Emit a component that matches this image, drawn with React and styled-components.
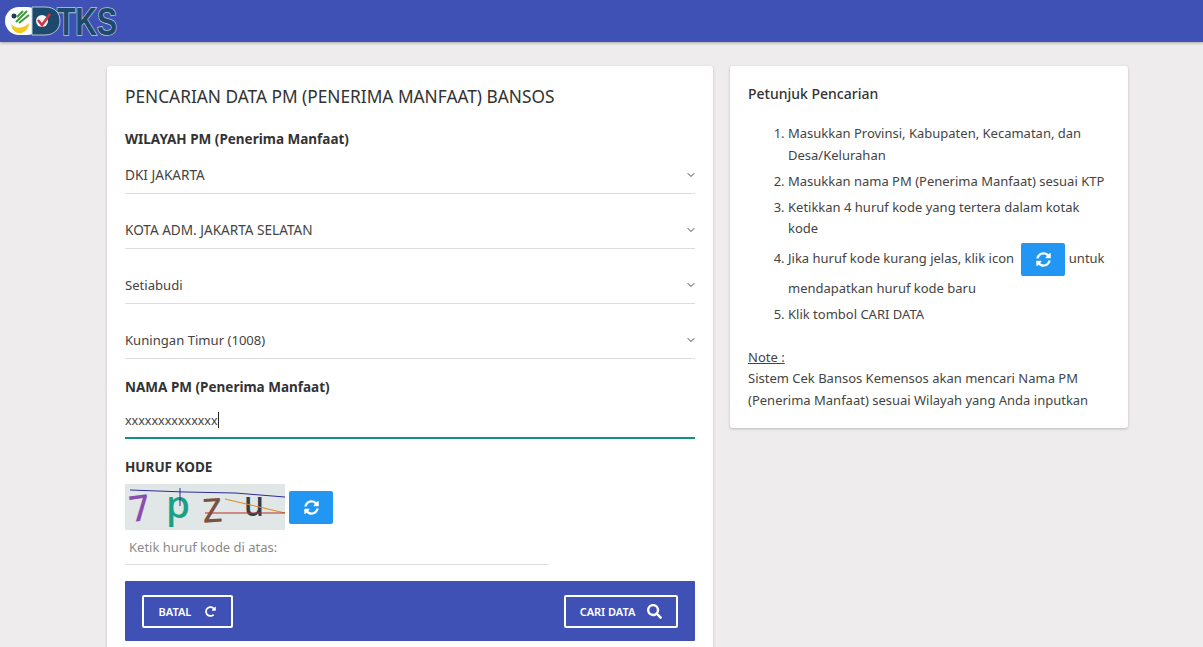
import React from "react";
import styled, { createGlobalStyle } from "styled-components";
import { FiChevronDown } from "react-icons/fi";
import { FaSyncAlt, FaRedoAlt, FaSearch } from "react-icons/fa";

const GlobalStyle = createGlobalStyle`
  html, body {
    margin: 0;
    padding: 0;
    height: 647px;
    overflow: hidden;
    background: #eeecec;
    font-family: "Noto Sans", "Open Sans", sans-serif;
    color: #333;
  }
`;

const Header = styled.header`
  height: 42px;
  background: #3f51b5;
  box-shadow: 0 1px 3px rgba(0, 0, 0, 0.3);
  display: flex;
  align-items: center;
  padding-left: 5px;
`;

const Page = styled.main`
  display: grid;
  grid-template-columns: 606px 398px;
  column-gap: 17px;
  align-items: start;
  padding: 24px 0 0 107px;
`;

const Card = styled.section`
  background: #fff;
  border-radius: 3px;
  box-shadow: 0 1px 3px rgba(0, 0, 0, 0.22);
`;

const FormCard = styled(Card)`
  padding: 18px 18px 40px;
`;

const HelpCard = styled(Card)`
  padding: 17px 18px 17px;
`;

const Title = styled.h1`
  margin: 0;
  font-size: 17.3px;
  line-height: 26px;
  font-weight: 400;
  color: #333;
`;

const Label = styled.div`
  font-size: 13.5px;
  line-height: 20px;
  font-weight: 700;
  color: #333;
  margin-top: ${(p) => p.$top || 0}px;
`;

const SelectRow = styled.div`
  height: ${(p) => (p.$first ? 45 : 55)}px;
  box-sizing: border-box;
  border-bottom: 1px solid #dcdcdc;
  display: flex;
  align-items: flex-end;
  justify-content: space-between;
  font-size: ${(p) => p.$size}px;
  line-height: 20px;
  padding-bottom: 8px;
  color: #444;
  svg {
    font-size: 12px;
    margin: 0 -2px 4px 0;
    stroke-width: 2;
    color: #444;
  }
`;

const NameInput = styled.div`
  height: 36px;
  box-sizing: border-box;
  border-bottom: 2px solid #138f85;
  display: flex;
  align-items: center;
  font-size: 12.5px;
  color: #444;
  margin-top: 6px;
`;

const Caret = styled.span`
  display: inline-block;
  width: 1px;
  height: 16px;
  background: #222;
`;

const CaptchaRow = styled.div`
  display: flex;
  align-items: flex-end;
  gap: 4px;
  margin-top: 7px;
`;

const Captcha = styled.svg`
  display: block;
  width: 160px;
  height: 46px;
  background: #e1e6e6;
`;

const RefreshButton = styled.span`
  display: inline-flex;
  align-items: center;
  justify-content: center;
  width: 44px;
  height: 33px;
  background: #2196f3;
  color: #fff;
  border-radius: 2px;
  font-size: 15px;
  margin-bottom: 6px;
`;

const InlineRefresh = styled(RefreshButton)`
  margin: -3px 0 -3px 4px;
  vertical-align: middle;
`;

const CodeInput = styled.div`
  width: 423px;
  height: 35px;
  box-sizing: border-box;
  border-bottom: 1px solid #dcdcdc;
  padding-left: 4px;
  font-size: 13px;
  line-height: 35px;
  color: #8a8a8a;
`;

const ActionBar = styled.div`
  height: 60px;
  background: #3f51b5;
  border-radius: 1px;
  margin-top: 16px;
  display: flex;
  align-items: center;
  justify-content: space-between;
  padding: 0 17px;
`;

const OutlineButton = styled.span`
  display: inline-flex;
  align-items: center;
  justify-content: center;
  gap: ${(p) => p.$gap}px;
  box-sizing: border-box;
  width: ${(p) => p.$width}px;
  height: 33px;
  border: 2px solid #fff;
  border-radius: 2px;
  color: #fff;
  font-size: 11px;
  font-weight: 600;
`;

const HelpTitle = styled.h2`
  margin: 0 0 19px;
  font-size: 14px;
  line-height: 21px;
  font-weight: 500;
  color: #333;
`;

const Steps = styled.ol`
  margin: 0;
  padding: 0 0 0 40px;
  font-size: 13px;
  color: #444;
`;

const Step = styled.li`
  line-height: 21.5px;
  margin-bottom: 4.5px;
`;

const IconStep = styled(Step)`
  line-height: 30px;
  margin-top: -1px;
  margin-bottom: 1px;
`;

const Note = styled.div`
  margin-top: 21px;
  font-size: 13px;
  line-height: 21.5px;
  color: #444;
  u {
    display: block;
  }
`;

const Logo = () => (
  <svg width="116" height="34" viewBox="0 0 116 34" style={{ display: "block" }}>
    <rect x="0" y="3" width="36" height="28" rx="14" fill="#fff" />
    <circle cx="9" cy="12" r="2.5" fill="#1c3c5c" />
    <path d="M11 18 L22 7 M14 19 L24 11 M12 13 L18 7" stroke="#3f9a3c" strokeWidth="2" />
    <path d="M6 20 C11 25 18 25 24 19 C24 26 18 30 13 29 C9 28 7 25 6 20 Z" fill="#f4c91e" />
    <text
      x="52"
      y="31"
      fontFamily="Liberation Sans, sans-serif"
      fontSize="38"
      fontWeight="700"
      textLength="60"
      lengthAdjust="spacingAndGlyphs"
      fill="#1d4a6c"
      stroke="#b4c8d8"
      strokeWidth="1.6"
      paintOrder="stroke"
    >
      TKS
    </text>
    <path d="M27 31 V3 H40 C50 3 55 9 55 17 C55 25 49 31 40 31 Z" fill="#1d4a6c" stroke="#b4c8d8" strokeWidth="1" />
    <circle cx="37" cy="17" r="6" fill="#f4f4f4" />
    <path d="M33 16 L37 21 L45 10" stroke="#d1353f" strokeWidth="2.6" fill="none" />
  </svg>
);

const CaptchaImage = () => (
  <Captcha viewBox="0 0 160 46">
    <text x="4" y="37" fontFamily="Noto Sans, sans-serif" fontSize="36" fontWeight="500" fill="#8a4db0" transform="rotate(-8 14 22)">7</text>
    <text x="41" y="34" fontFamily="Noto Sans, sans-serif" fontSize="38" textLength="24" lengthAdjust="spacingAndGlyphs" fontWeight="500" fill="#18a184">p</text>
    <text x="77" y="38" fontFamily="Noto Sans, sans-serif" fontSize="44" fill="#7a5244" transform="rotate(-4 88 26)">z</text>
    <text x="119" y="32" fontFamily="Noto Sans, sans-serif" fontSize="34" textLength="20" lengthAdjust="spacingAndGlyphs" fontWeight="500" fill="#2c3e50">u</text>
    <path d="M5 6 L60 8 L110 9 L160 13" stroke="#2c2c9a" strokeWidth="1" fill="none" />
    <path d="M100 15 L160 29" stroke="#e08a1e" strokeWidth="1" />
    <path d="M80 29 L160 29" stroke="#b5322a" strokeWidth="1" />
    <path d="M55 4 V22" stroke="#2c2c9a" strokeWidth="1" />
  </Captcha>
);

const selects = [
  { text: "DKI JAKARTA", size: 13.6 },
  { text: "KOTA ADM. JAKARTA SELATAN", size: 13.6 },
  { text: "Setiabudi", size: 13.1 },
  { text: "Kuningan Timur (1008)", size: 13.1 },
];

export default function App() {
  return (
    <>
      <GlobalStyle />
      <Header>
        <Logo />
      </Header>
      <Page>
        <FormCard>
          <Title>PENCARIAN DATA PM (PENERIMA MANFAAT) BANSOS</Title>
          <Label $top={19}>WILAYAH PM (Penerima Manfaat)</Label>
          {selects.map((s, i) => (
            <SelectRow key={s.text} $size={s.size} $first={i === 0}>
              {s.text}
              <FiChevronDown />
            </SelectRow>
          ))}
          <Label $top={18}>NAMA PM (Penerima Manfaat)</Label>
          <NameInput>
            xxxxxxxxxxxxxx
            <Caret />
          </NameInput>
          <Label $top={18}>HURUF KODE</Label>
          <CaptchaRow>
            <CaptchaImage />
            <RefreshButton>
              <FaSyncAlt />
            </RefreshButton>
          </CaptchaRow>
          <CodeInput>Ketik huruf kode di atas:</CodeInput>
          <ActionBar>
            <OutlineButton $width={91} $gap={14}>
              BATAL <FaRedoAlt size={11} />
            </OutlineButton>
            <OutlineButton $width={114} $gap={12}>
              CARI DATA <FaSearch size={15} />
            </OutlineButton>
          </ActionBar>
        </FormCard>
        <HelpCard>
          <HelpTitle>Petunjuk Pencarian</HelpTitle>
          <Steps>
            <Step>Masukkan Provinsi, Kabupaten, Kecamatan, dan Desa/Kelurahan</Step>
            <Step>Masukkan nama PM (Penerima Manfaat) sesuai KTP</Step>
            <Step>Ketikkan 4 huruf kode yang tertera dalam kotak kode</Step>
            <IconStep>
              Jika huruf kode kurang jelas, klik icon{" "}
              <InlineRefresh>
                <FaSyncAlt />
              </InlineRefresh>{" "}
              untuk mendapatkan huruf kode baru
            </IconStep>
            <Step>Klik tombol CARI DATA</Step>
          </Steps>
          <Note>
            <u>Note :</u>
            Sistem Cek Bansos Kemensos akan mencari Nama PM (Penerima Manfaat) sesuai Wilayah yang Anda inputkan
          </Note>
        </HelpCard>
      </Page>
    </>
  );
}
